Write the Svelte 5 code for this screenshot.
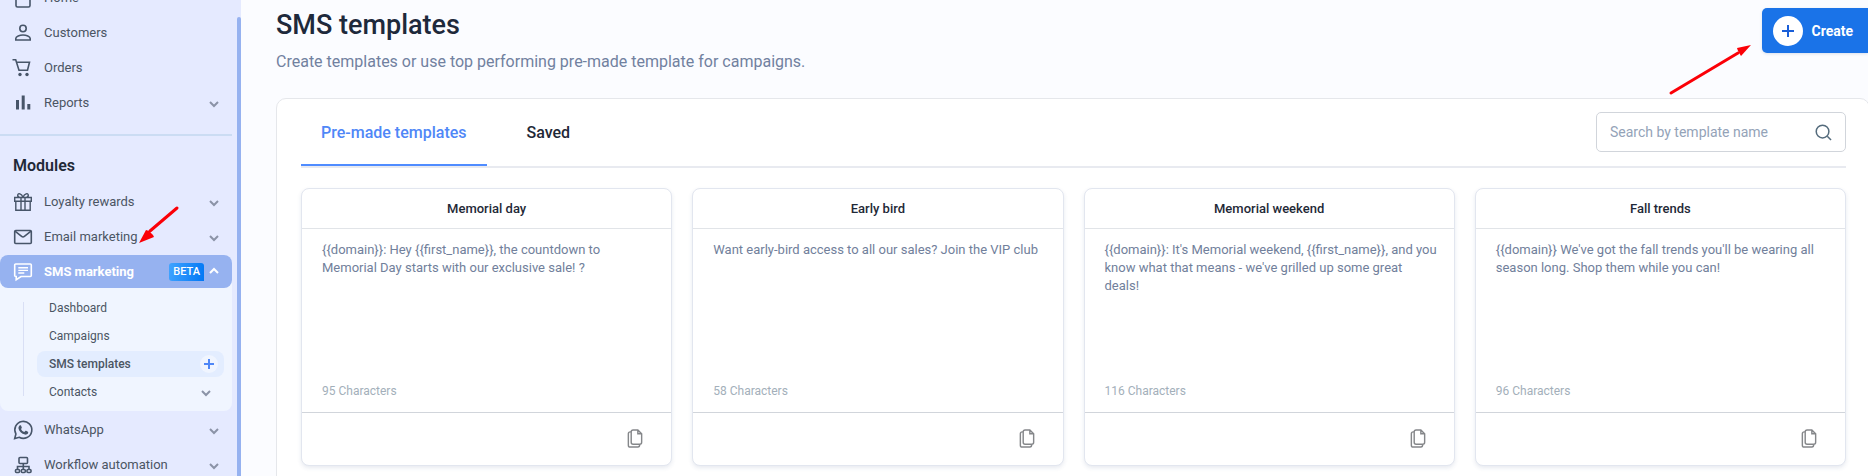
<script lang="ts">
    let tab = $state('premade');
    let search = $state('');
    let smsOpen = $state(true);

    const mainItems = [
        { icon: 'home', label: 'Home', expandable: false },
        { icon: 'user', label: 'Customers', expandable: false },
        { icon: 'cart', label: 'Orders', expandable: false },
        { icon: 'chart', label: 'Reports', expandable: true }
    ];

    const modulesTop = [
        { icon: 'gift', label: 'Loyalty rewards', expandable: true },
        { icon: 'mail', label: 'Email marketing', expandable: true }
    ];

    const modulesBottom = [
        { icon: 'whatsapp', label: 'WhatsApp', expandable: true },
        { icon: 'flow', label: 'Workflow automation', expandable: true }
    ];

    const templates = [
        {
            name: 'Memorial day',
            text: '{{domain}}: Hey {{first_name}}, the countdown to Memorial Day starts with our exclusive sale! ?',
            length: 95,
            saved: false
        },
        {
            name: 'Early bird',
            text: 'Want early-bird access to all our sales? Join the VIP club',
            length: 58,
            saved: false
        },
        {
            name: 'Memorial weekend',
            text: "{{domain}}: It's Memorial weekend, {{first_name}}, and you know what that means - we've grilled up some great deals!",
            length: 116,
            saved: false
        },
        {
            name: 'Fall trends',
            text: "{{domain}} We've got the fall trends you'll be wearing all season long. Shop them while you can!",
            length: 96,
            saved: false
        }
    ];

    const visible = $derived(
        templates.filter(
            (t) =>
                t.saved === (tab === 'saved') && t.name.toLowerCase().includes(search.toLowerCase())
        )
    );
</script>

{#snippet icon(name)}
    <svg class="icon" viewBox="0 0 20 20" aria-hidden="true">
        {#if name === 'home'}
            <path d="M3 8l7-6 7 6v9.500a1.500 1.500 0 0 1-1.500 1.500h-11A1.500 1.500 0 0 1 3 17.500z" />
        {:else if name === 'user'}
            <circle cx="10" cy="5.500" r="3.200" />
            <path d="M2.800 17v-1.500c0-2.200 4-3.500 7.200-3.500s7.200 1.300 7.200 3.500V17z" />
        {:else if name === 'cart'}
            <path d="M-.500 1.800h3.200l3.300 10.400h8.500l2-8H3.500" />
            <circle class="solid" cx="7" cy="16.500" r="1.700" />
            <circle class="solid" cx="14" cy="16.500" r="1.700" />
        {:else if name === 'chart'}
            <path class="solid" d="M3 7h3v9.500H3zM8.700 2.500h3v14h-3zM14.300 11h3v5.500h-3z" />
        {:else if name === 'gift'}
            <path
                class="thin"
                d="M1.700 5.500h16.600v3.800H1.700zM2.800 9.300h14.400v9H2.800zM8 5.500v12.800M12 5.500v12.800M10 5.200C8.500 1.500 5 .800 4.700 3c-.100 1.300.800 2.200 2 2.400M10 5.200C11.500 1.500 15 .800 15.300 3c.100 1.300-.800 2.200-2 2.400"
            />
        {:else if name === 'mail'}
            <rect x="1.700" y="3.500" width="16.600" height="13" rx="1" />
            <path d="M2 4.200l6.600 5.200a2.200 2.200 0 0 0 2.800 0L18 4.200" />
        {:else if name === 'chat'}
            <path d="M2.700 2h14.600a1 1 0 0 1 1 1v10.500a1 1 0 0 1-1 1H8l-4.800 3.200v-3.200h-.500a1 1 0 0 1-1-1V3a1 1 0 0 1 1-1z" />
            <path class="thin" d="M5.300 5.800h9.700M5.300 8.400h9.700M5.300 11h6" />
        {:else if name === 'whatsapp'}
            <path d="M1.700 18.500l1.200-4.500A8.500 8.500 0 1 1 6.200 17.300z" />
            <path
                class="solid"
                d="M6.800 5.300c.600-.300 1-.100 1.200.300l.800 1.800c.100.400-.100.600-.800 1.500.700 1.500 1.800 2.500 3.300 3.200l1-1.100c.200-.300.500-.300.800-.200l1.800.900c.500.300.300 1.200 0 1.800-.500.900-1.900 1.300-2.900 1.100-3.500-.700-6-3.400-6.500-6-.200-1.300.400-2.600 1.300-3.300z"
            />
        {:else if name === 'flow'}
            <rect x="6" y="2.500" width="8.500" height="6" rx="1" />
            <rect x="2.500" y="14.500" width="4" height="3" rx="1" />
            <rect x="8.300" y="14.500" width="4" height="3" rx="1" />
            <rect x="14" y="14.500" width="4" height="3" rx="1" />
            <path d="M10.300 8.500v6M4.500 14.500v-3H16v3" />
        {/if}
    </svg>
{/snippet}

{#snippet chevron(up)}
    <svg class="chevron" viewBox="0 0 10 10" aria-hidden="true">
        <path d={up ? 'M1 6l4-4 4 4' : 'M1 4l4 4 4-4'} />
    </svg>
{/snippet}

{#snippet navItem(item)}
    <li>
        <a class="nav-item" href="#{item.icon}">
            {@render icon(item.icon)}
            <span class="label">{item.label}</span>
            {#if item.expandable}
                {@render chevron(false)}
            {/if}
        </a>
    </li>
{/snippet}

<div class="layout">
    <aside class="sidebar">
        <nav>
            <ul>
                {#each mainItems as item}
                    {@render navItem(item)}
                {/each}
            </ul>

            <hr />

            <h2>Modules</h2>
            <ul>
                {#each modulesTop as item}
                    {@render navItem(item)}
                {/each}
                <li class="group">
                    <button class="nav-item active" onclick={() => (smsOpen = !smsOpen)}>
                        {@render icon('chat')}
                        <span class="label">SMS marketing</span>
                        <span class="beta">BETA</span>
                        {@render chevron(smsOpen)}
                    </button>
                    {#if smsOpen}
                        <ul class="submenu">
                            <li><a href="#dashboard">Dashboard</a></li>
                            <li><a href="#campaigns">Campaigns</a></li>
                            <li>
                                <a class="current" href="#templates">
                                    SMS templates
                                    <span class="add">
                                        <svg viewBox="0 0 10 10" aria-hidden="true">
                                            <path d="M5 0v10M0 5h10" />
                                        </svg>
                                    </span>
                                </a>
                            </li>
                            <li>
                                <a class="contacts" href="#contacts">Contacts {@render chevron(false)}</a>
                            </li>
                        </ul>
                    {/if}
                </li>
                {#each modulesBottom as item}
                    {@render navItem(item)}
                {/each}
            </ul>
        </nav>
        <div class="scrollbar"></div>

        <svg class="arrow arrow-menu" viewBox="0 0 42 38" aria-hidden="true">
            <path class="shaft" d="M39 3L12 26" />
            <path class="head" d="M1 38L8 25l3 1 4 4 1 2z" />
        </svg>
    </aside>

    <main>
        <header>
            <div>
                <h1>SMS templates</h1>
                <p>Create templates or use top performing pre-made template for campaigns.</p>
            </div>
            <button class="create">
                <span class="plus">
                    <svg viewBox="0 0 12 12" aria-hidden="true"><path d="M6 0v12M0 6h12" /></svg>
                </span>
                Create
            </button>

            <svg class="arrow arrow-create" viewBox="0 0 84 52" aria-hidden="true">
                <path class="shaft" d="M3 49L70 9" />
                <path class="head" d="M83 1L69 4l1 3 3 5z" />
            </svg>
        </header>

        <section class="panel">
            <div class="toolbar">
                <div class="tabs" role="tablist">
                    <button
                        role="tab"
                        aria-selected={tab === 'premade'}
                        class:selected={tab === 'premade'}
                        onclick={() => (tab = 'premade')}>Pre-made templates</button
                    >
                    <button
                        role="tab"
                        aria-selected={tab === 'saved'}
                        class:selected={tab === 'saved'}
                        onclick={() => (tab = 'saved')}>Saved</button
                    >
                </div>
                <label class="search">
                    <input
                        type="text"
                        placeholder="Search by template name"
                        aria-label="Search by template name"
                        bind:value={search}
                    />
                    <svg viewBox="0 0 18 18" aria-hidden="true">
                        <circle cx="8" cy="8" r="6.700" />
                        <path d="M13 13l4 4" />
                    </svg>
                </label>
            </div>

            <div class="cards">
                {#each visible as template}
                    <article class="card">
                        <h3>{template.name}</h3>
                        <div class="body">
                            <p>{template.text}</p>
                            <span class="count">{template.length} Characters</span>
                        </div>
                        <footer>
                            <button class="copy" aria-label="Copy {template.name}">
                                <svg viewBox="0 0 16 20" aria-hidden="true">
                                    <path
                                        d="M6 1h5l4 4v9a2 2 0 0 1-2 2H6a2 2 0 0 1-2-2V3a2 2 0 0 1 2-2zM11 1v4h4M4 3H3a2 2 0 0 0-2 2v12a2 2 0 0 0 2 2h8c1 0 2-1 2-3"
                                    />
                                </svg>
                            </button>
                        </footer>
                    </article>
                {/each}
            </div>
        </section>
    </main>
</div>

<style>
    :global(body) {
        font-family: Roboto, 'Liberation Sans', sans-serif;
        background: #fbfcff;
    }

    .layout {
        display: flex;
        height: 100vh;
        overflow: hidden;
    }

    h1,
    h2,
    h3,
    p,
    ul {
        margin: 0;
        padding: 0;
    }

    ul {
        list-style: none;
    }

    a {
        text-decoration: none;
    }

    button {
        font-family: inherit;
        border: none;
        background: none;
        padding: 0;
        cursor: pointer;
    }

    svg {
        fill: none;
        stroke: currentColor;
        overflow: visible;
        flex: none;
    }

    /* sidebar */
    .sidebar {
        position: relative;
        display: flex;
        justify-content: space-between;
        flex: none;
        width: 241px;
        background: #e5eaff;
    }

    /* the menu is scrolled down a little */
    nav {
        width: 232px;
        margin-top: -20px;
    }

    .scrollbar {
        width: 4px;
        margin-top: 17px;
        border-radius: 4px 4px 0 0;
        background: #96b2f0;
    }

    .nav-item {
        display: flex;
        align-items: center;
        box-sizing: border-box;
        width: 100%;
        height: 35px;
        padding: 0 13px;
        font-size: 13px;
        text-align: left;
        color: #4b5563;
    }

    .label {
        flex: 1;
        margin-left: 11px;
    }

    .icon {
        width: 20px;
        height: 20px;
        stroke-width: 1.600;
        color: #475569;
    }

    .icon .thin {
        stroke-width: 1.400;
    }

    .icon .solid {
        fill: currentColor;
        stroke: none;
    }

    .chevron {
        width: 10px;
        height: 10px;
        stroke-width: 2;
        color: #8b93a7;
    }

    hr {
        height: 2px;
        margin: 14px 0 15px;
        border: none;
        background: #cbdcf3;
    }

    h2 {
        margin-bottom: 4px;
        padding-left: 13px;
        font-size: 16px;
        font-weight: 600;
        line-height: 29px;
        color: #1f2937;
    }

    .group {
        margin: 1px 0;
        border-radius: 8px;
        background: #f0f5ff;
    }

    .nav-item.active {
        height: 33px;
        border-radius: 8px;
        background: #96b2f0;
        font-weight: 700;
        color: #fff;
    }

    .active .icon,
    .active .chevron {
        color: #fff;
    }

    .beta {
        margin-right: 5px;
        padding: 0 4px;
        border-radius: 3px 3px 0 3px;
        background: linear-gradient(100deg, #41a4ff, #0077f5);
        font-size: 11px;
        font-weight: 500;
        line-height: 18px;
    }

    .submenu {
        padding: 7px 8px 4px 37px;
        background: linear-gradient(#d9dff5, #d9dff5) 23px 14px / 1px 94px no-repeat;
    }

    .submenu a {
        display: flex;
        align-items: center;
        justify-content: space-between;
        height: 26px;
        margin: 0 0 2px;
        padding: 0 6px 0 12px;
        border-radius: 8px;
        font-size: 12px;
        color: #4b5563;
    }

    .submenu .current {
        background: #e3edff;
        font-weight: 500;
    }

    .submenu .contacts {
        padding-right: 13px;
    }

    .add {
        display: grid;
        place-items: center;
        width: 18px;
        height: 18px;
        border-radius: 50%;
        background: #f0f5ff;
        color: #4f87f7;
    }

    .add svg {
        width: 10px;
        height: 10px;
        stroke-width: 2;
    }

    /* pointers drawn over the page */
    .arrow {
        position: absolute;
        color: #fb0007;
    }

    .arrow .shaft {
        stroke-width: 3;
        stroke-linecap: round;
    }

    .arrow .head {
        fill: currentColor;
        stroke: none;
    }

    .arrow-menu {
        top: 205px;
        left: 138px;
        width: 42px;
        height: 38px;
    }

    .arrow-create {
        top: 44px;
        right: 116px;
        width: 84px;
        height: 52px;
    }

    /* main */
    main {
        flex: 1;
        min-width: 0;
        padding-left: 35px;
    }

    header {
        position: relative;
        display: flex;
        justify-content: space-between;
        align-items: flex-start;
        padding: 8px 0 24px;
    }

    h1 {
        font-size: 27px;
        font-weight: 500;
        line-height: 34px;
        color: #1e293b;
    }

    header p {
        margin-top: 8px;
        font-size: 16px;
        line-height: 24px;
        color: #7181a0;
    }

    .create {
        display: flex;
        align-items: center;
        gap: 8px;
        height: 45px;
        padding: 0 15px 0 11px;
        border-radius: 5px 0 0 5px;
        background: #1a73e8;
        box-shadow: 0 1px 3px rgba(30, 60, 120, 0.15);
        font-size: 14px;
        font-weight: 700;
        color: #fff;
    }

    .plus {
        display: grid;
        place-items: center;
        width: 30px;
        height: 30px;
        border-radius: 50%;
        background: #fff;
        color: #1a5fd8;
    }

    .plus svg {
        width: 12px;
        height: 12px;
        stroke-width: 2;
    }

    .panel {
        margin-right: -2px;
        padding: 0 23px 24px 24px;
        border: 1px solid #e5e7eb;
        border-radius: 10px;
        background: #fff;
    }

    .toolbar {
        display: flex;
        justify-content: space-between;
        align-items: flex-start;
        height: 67px;
        border-bottom: 2px solid #e8eaf0;
    }

    .tabs {
        display: flex;
        align-self: stretch;
    }

    .tabs button {
        padding: 0 20px;
        margin-right: 20px;
        border-top: 2px solid transparent;
        border-bottom: 2px solid transparent;
        font-size: 16px;
        font-weight: 500;
        color: #1f2937;
    }

    .tabs button.selected {
        border-bottom-color: #4f8cff;
        color: #4f87f7;
    }

    .search {
        display: flex;
        align-items: center;
        box-sizing: border-box;
        width: 250px;
        height: 40px;
        margin-top: 13px;
        padding: 0 13px;
        border: 1px solid #d1d5db;
        border-radius: 5px;
        color: #546b7c;
    }

    .search input {
        flex: 1;
        min-width: 0;
        padding: 0;
        border: none;
        outline: none;
        background: none;
        font-family: inherit;
        font-size: 14px;
        color: #1f2937;
    }

    .search input::placeholder {
        color: #94a3b8;
    }

    .search svg {
        width: 17px;
        height: 17px;
        stroke-width: 1.600;
    }

    .cards {
        display: grid;
        grid-template-columns: repeat(4, 1fr);
        gap: 20px;
        margin-top: 20px;
    }

    .card {
        border: 1px solid #e2e6ef;
        border-radius: 8px;
        background: #fff;
        box-shadow: 0 2px 4px rgba(60, 80, 130, 0.12);
    }

    .card h3 {
        border-bottom: 1px solid #e1e4e8;
        font-size: 13px;
        font-weight: 500;
        line-height: 39px;
        text-align: center;
        color: #1f2937;
    }

    .body {
        display: flex;
        flex-direction: column;
        justify-content: space-between;
        box-sizing: border-box;
        height: 184px;
        padding: 12px 17px 12px 20px;
        border-bottom: 1px solid #d1d5db;
    }

    .body p {
        font-size: 13px;
        line-height: 18px;
        color: #71809b;
    }

    .count {
        font-size: 12px;
        line-height: 18px;
        color: #a3afba;
    }

    footer {
        display: flex;
        align-items: flex-start;
        justify-content: flex-end;
        box-sizing: border-box;
        height: 52px;
        padding: 16px 28px;
    }

    .copy {
        display: flex;
        color: #85878a;
    }

    .copy svg {
        width: 16px;
        height: 19px;
        stroke-width: 1.500;
    }
</style>
